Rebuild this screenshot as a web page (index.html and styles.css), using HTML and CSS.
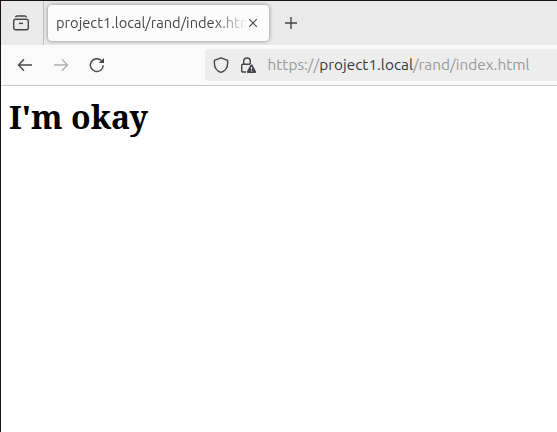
FILE: index.html
```html
<!DOCTYPE html>
<html lang="en">
<head>
<meta charset="utf-8">
<title>project1.local/rand/index.html</title>
<link rel="stylesheet" href="styles.css">
</head>
<body>
<div class="window">
  <div class="tabs">
    <div class="recent">
      <svg width="18" height="18" viewBox="0 0 18 18"><path d="M3.500 3.200Q3.900 2 5 2h8Q14.100 2 14.500 3.200"/><rect x="1.700" y="5.200" width="14.600" height="10.600" rx="2"/><path d="M7 9.400h4"/></svg>
    </div>
    <div class="tab">
      <span class="title">project1.local/rand/index.html</span>
      <svg width="10" height="10" viewBox="0 0 10 10"><path d="M1.2 1.2l7.6 7.6M8.8 1.2L1.2 8.8" stroke-width="1.1"/></svg>
    </div>
    <svg class="plus" width="14" height="14" viewBox="0 0 14 14"><path d="M7 1v12M1 7h12"/></svg>
  </div>
  <div class="toolbar">
    <svg width="16" height="16" viewBox="0 0 16 16"><path d="M15 8H1.7M7 2.3L1.500 8L7 13.700"/></svg>
    <svg class="off" width="16" height="16" viewBox="0 0 16 16"><path d="M1 8h13.3M9 2.3L14.500 8L9 13.7"/></svg>
    <svg width="16" height="16" viewBox="0 0 16 16"><path d="M14.200 8.200A6.400 6.400 0 1 1 12.300 3.600"/><path class="fill" d="M15 1v5H9.800z"/></svg>
    <div class="url">
      <svg width="16" height="16" viewBox="0 0 16 16"><path d="M8 .8L14.600 3.300V6.500C14.600 10.500 12 14 8 15.300C4 14 1.400 10.500 1.400 6.500V3.300Z" stroke-linejoin="round"/></svg>
      <svg class="lock" width="16" height="16" viewBox="0 0 16 16"><path d="M3.700 7V4.300a3.300 3.300 0 0 1 6.600 0V7M6 15H2.700a1 1 0 0 1-1-1V8.200a1 1 0 0 1 1-1h7.300"/><path class="fill" d="M11.500 7.300Q12.100 7.300 12.600 8.100L16 14.500Q16.300 15.900 15.200 15.900H7.700Q6.500 15.900 6.900 14.500L10.400 8.100Q10.900 7.300 11.500 7.300Z"/><path class="mark" d="M11.500 10v2.500M11.500 13.500v1"/></svg>
      <span class="address">https://<b>project1.local</b>/rand/index.html</span>
    </div>
  </div>
  <main><h1>I'm okay</h1></main>
</div>
</body>
</html>
```
FILE: styles.css
```css
* { box-sizing: border-box; }
body { margin: 0; background: #fff; font-family: Ubuntu, "Noto Sans", sans-serif; }
.window { height: 432px; border: solid #1b0f18; border-width: 1px 0 0 1px; overflow: hidden; }
svg { flex: none; fill: none; stroke: #45454a; stroke-width: 1.4; }
.fill { fill: #45454a; stroke: none; }
.mark { stroke: #ededed; stroke-width: 1.2; }
.tabs { display: flex; align-items: center; height: 44px; background: #eaeaea; }
.recent { display: flex; align-items: center; padding-left: 11px; width: 43px; height: 44px; border-right: 1px solid #bcbcbc; }
.tab { display: flex; align-items: center; gap: 2px; width: 221px; height: 36px; margin-left: 4px; padding-left: 8px; border-radius: 4px; background: #fcfcfc; box-shadow: 0 0 4px rgba(0,0,0,.45); }
.title { width: 190px; overflow: hidden; white-space: nowrap; font-size: 14.667px; line-height: 24px; color: #45454a; -webkit-mask-image: linear-gradient(to right, #000 158px, transparent 192px); mask-image: linear-gradient(to right, #000 158px, transparent 192px); }
.plus { margin-left: 15px; }
.toolbar { display: flex; align-items: center; gap: 20px; height: 41px; padding-left: 16px; background: #fafafa; border-bottom: 1px solid #c8c8c8; }
.off { opacity: .4; }
.url { display: flex; align-items: center; flex: 1; height: 32px; margin-left: 80px; padding-left: 8px; border-radius: 4px 0 0 4px; background: #ededed; }
.lock { margin-left: 11px; }
.address { margin-left: 11.5px; white-space: nowrap; font-size: 15.4px; line-height: 24px; color: #999; }
.address b { font-weight: 400; color: #38383d; }
main { padding: 7px 8px; }
h1 { margin: 0; font: bold 32px/48px "Noto Serif", "DejaVu Serif Condensed", "DejaVu Serif", serif; color: #000; white-space: nowrap; }
```
